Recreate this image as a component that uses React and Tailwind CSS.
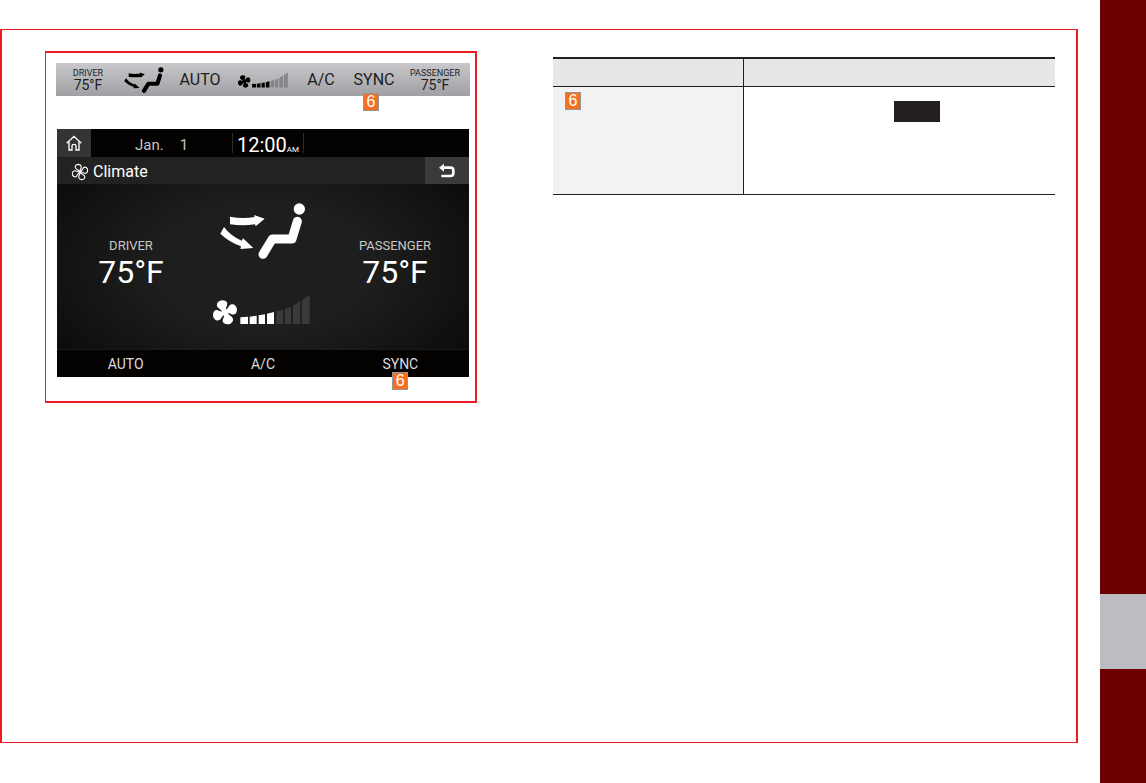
const BLADE = "M-6 6 C-7 -5 -13 -8 -20 -13 C-30 -23 -21 -36 -7 -36 C7 -35 9 -26 5 -18 C2 -12 2 -8 6 -5 Z";
const BLADE_OUTLINE = "M0 0 C-5 -9 -12 -10 -18 -15 C-26 -23 -19 -34 -7 -34 C5 -33 8 -25 4 -17 C1 -11 0 -6 0 0 Z";

// bars of the fan speed scale, the first four are the active ones
const BARS = [
  "121,382 144,380 144,402 121,402",
  "149,380 170,377 170,402 149,402",
  "176,376 195,373 195,402 176,402",
  "201,371 222,366 222,402 201,402",
  "229,364 249,359 249,402 229,402",
  "254,357 273,350 273,402 254,402",
  "279,347 301,334 301,402 279,402",
  "306,331 329,315 329,402 306,402",
];

const Blades = ({ d }) => (
  <>
    <path d={d} />
    <path d={d} transform="rotate(90)" />
    <path d={d} transform="rotate(180)" />
    <path d={d} transform="rotate(270)" />
  </>
);

const SeatIcon = ({ className }) => (
  <svg className={className} viewBox="58 39 258 168" fill="currentColor" aria-hidden="true">
    <circle cx="296" cy="57" r="17" />
    <path
      d="M187 193 L215 147 L274 147 L290 94"
      fill="none"
      stroke="currentColor"
      strokeWidth="27"
      strokeLinecap="round"
      strokeLinejoin="round"
    />
    <path d="M88 80 Q126 87 162 81 L160 75 L192 86 L165 109 L163 103 Q126 109 88 103 Z" />
    <path d="M70 111 Q90 138 123 152 L127 145 L158 174 L119 177 L121 169 Q84 155 59 131 Z" />
  </svg>
);

const FanSpeed = ({ className, off }) => (
  <svg className={className} viewBox="36 312 297 93" fill="currentColor" aria-hidden="true">
    <g transform="translate(75 367)">
      <Blades d={BLADE} />
    </g>
    {BARS.map((points, i) => (
      <polygon key={i} points={points} fill={i < 4 ? "currentColor" : off} />
    ))}
  </svg>
);

const Badge = ({ className = "" }) => (
  <span
    className={`flex h-[18px] w-4 items-center justify-center border border-[#939598] bg-[#f37021] font-['Liberation_Sans',sans-serif] text-base leading-4 text-white ${className}`}
  >
    6
  </span>
);

const StripTemp = ({ label }) => (
  <div className="flex flex-col items-center">
    <span className="text-[9px] leading-[10px]">{label}</span>
    <span className="text-[14px] leading-[14px]">75°F</span>
  </div>
);

const ScreenTemp = ({ label }) => (
  <div className="flex flex-col items-center gap-0.5 pt-[54px]">
    <span className="text-[13px] leading-4 text-[#c8c8c8]">{label}</span>
    <span className="text-[32px] leading-8">75°F</span>
  </div>
);

const ControlStrip = () => (
  <div className="grid h-[33px] grid-cols-[64fr_48fr_64fr_62fr_54fr_52fr_70fr] items-center justify-items-center bg-linear-to-b from-[#c9c9cc] to-[#a0a0a4] text-base text-[#1c1c1e]">
    <StripTemp label="DRIVER" />
    <SeatIcon className="h-[26px] w-10 text-black" />
    <button type="button">AUTO</button>
    <FanSpeed className="h-4 w-[52px] text-black" off="#85858a" />
    <button type="button">A/C</button>
    <div className="relative flex h-full w-full items-center justify-center">
      <button type="button">SYNC</button>
      <Badge className="absolute top-[30px] left-[15px]" />
    </div>
    <StripTemp label="PASSENGER" />
  </div>
);

const ClimateScreen = () => (
  <div className="mx-px mt-[33px] bg-[#040101] text-white">
    <div className="flex h-7 items-stretch">
      <button type="button" aria-label="Home" className="flex w-[34px] items-center justify-center bg-[#343434]">
        <svg className="h-4 w-4" viewBox="0 0 48 48" fill="none" stroke="currentColor" strokeWidth="4" aria-hidden="true">
          <path d="M2 25 L24 4 L46 25 M9 20 V45 H18 V32 Q18 28 24 28 Q30 28 30 32 V45 H39 V20" />
        </svg>
      </button>
      <div className="flex w-[141px] items-center gap-4 pt-1 pl-11 text-[15px] text-[#c4c4c4]">
        <span>Jan.</span>
        <span>1</span>
      </div>
      <div className="my-1 flex items-baseline justify-center border-x border-[#2c2c2c] px-1 text-xl leading-6">
        12:00<span className="text-[8px]">AM</span>
      </div>
    </div>

    <div className="flex h-[27px] items-stretch justify-between bg-[#222222]">
      <h1 className="flex items-center gap-1 pt-0.5 pl-3.5 text-base">
        <svg
          className="h-[18px] w-[18px]"
          viewBox="-40 -40 80 80"
          fill="none"
          stroke="currentColor"
          strokeWidth="5"
          strokeLinejoin="round"
          aria-hidden="true"
        >
          <Blades d={BLADE_OUTLINE} />
        </svg>
        Climate
      </h1>
      <button type="button" aria-label="Back" className="flex w-11 items-center justify-center bg-[#3a3a3a]">
        <svg className="h-4 w-[18px]" viewBox="0 0 54 48" fill="none" aria-hidden="true">
          <path d="M15 14 H37 Q46 14 46 22 V31 Q46 39 37 39 H10" stroke="currentColor" strokeWidth="8" />
          <path d="M3 14 L18 2 V26 Z" fill="currentColor" />
        </svg>
      </button>
    </div>

    <div className="grid h-[165px] grid-cols-3 bg-radial-[ellipse_75%_110%_at_center] from-[#1e1e1e] from-35% to-[#070402] px-2">
      <ScreenTemp label="DRIVER" />
      <div className="flex flex-col items-center gap-[35px] pt-[19px]">
        <SeatIcon className="h-14 w-[86px]" />
        <FanSpeed className="mr-1 h-[31px] w-[99px]" off="#3a3a3a" />
      </div>
      <ScreenTemp label="PASSENGER" />
    </div>

    <div className="grid h-7 grid-cols-3 border-t border-[#1a1a1a] text-sm text-[#dcdcdc]">
      <button type="button">AUTO</button>
      <button type="button">A/C</button>
      <div className="relative flex items-center justify-center">
        <button type="button">SYNC</button>
        <Badge className="absolute top-[22px] left-1/2 -ml-2" />
      </div>
    </div>
  </div>
);

const FunctionTable = () => (
  <table className="mt-1.5 w-full table-fixed border-separate border-spacing-0 border-t-2 border-[#231f20]">
    <colgroup>
      <col className="w-[190px]" />
      <col />
    </colgroup>
    <thead>
      <tr className="h-7 bg-[#e6e7e8]">
        <th scope="col" className="border-b border-[#231f20] p-0"></th>
        <th scope="col" className="border-b border-l border-[#231f20] p-0"></th>
      </tr>
    </thead>
    <tbody>
      <tr className="h-27 align-top">
        <td className="border-b border-[#231f20] bg-[#f2f2f2] p-0 pt-[5px] pl-3">
          <Badge />
        </td>
        <td className="border-b border-l border-[#231f20] p-0 pt-3.5 pl-[150px]">
          <div className="h-[21px] w-[46px] bg-[#231f20]"></div>
        </td>
      </tr>
    </tbody>
  </table>
);

const App = () => {
  return (
    <div className="flex min-h-screen bg-white font-[Roboto,sans-serif]">
      <main className="flex flex-1 pt-[29px] pr-[22px] pb-10">
        <div className="flex flex-1 items-start gap-[76px] border-x-2 border-y border-[#ed1c24] pt-[21px] pr-[21px] pl-[43px]">
          <section className="w-[432px] shrink-0 border-2 border-l border-[#ed1c24] pt-2.5 pr-[5px] pb-6 pl-2.5">
            <ControlStrip />
            <ClimateScreen />
          </section>
          <div className="min-w-0 flex-1">
            <FunctionTable />
          </div>
        </div>
      </main>

      {/* Chapter tab */}
      <aside className="flex w-[46px] flex-col justify-end bg-[#6d0000] pb-[114px]">
        <div className="h-[75px] bg-[#bbbdc0]"></div>
      </aside>
    </div>
  );
};

export default App;
